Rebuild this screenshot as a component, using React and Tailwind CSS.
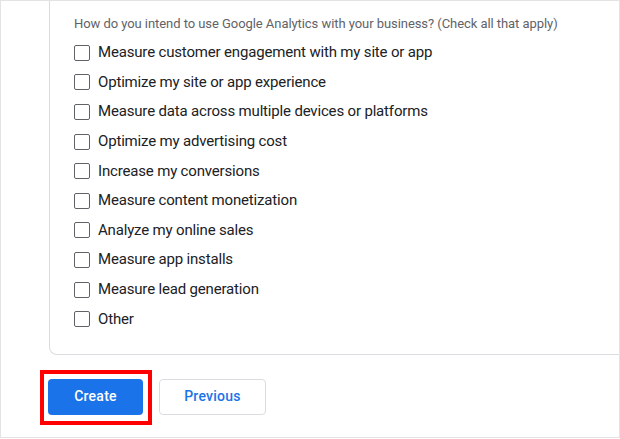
import React from "react";

const items = [
  "Measure customer engagement with my site or app",
  "Optimize my site or app experience",
  "Measure data across multiple devices or platforms",
  "Optimize my advertising cost",
  "Increase my conversions",
  "Measure content monetization",
  "Analyze my online sales",
  "Measure app installs",
  "Measure lead generation",
  "Other",
];

export default function App() {
  return (
    <div
      className="w-[620px] h-[438px] border border-[#e3e3e3] bg-white overflow-hidden"
      style={{ fontFamily: "Roboto, 'Noto Sans', Arial, sans-serif" }}
    >
      <div className="ml-[48px] border-l border-b border-[#dadce0] rounded-bl-[8px] pl-[24px] pt-[13px] pb-[20px]">
        <div className="text-[13px] leading-[20px] text-[#5f6368] tracking-[-0.06px] h-[24px]">
          How do you intend to use Google Analytics with your business? (Check all that apply)
        </div>
        <div className="flex flex-col">
          {items.map((t) => (
            <label key={t} className="flex items-center h-[29.6px]">
              <span className="w-[16px] h-[16px] border-[1.6px] border-[#5f6368] rounded-[2px] shrink-0"></span>
              <span className="ml-[8px] text-[15px] text-[#202124] tracking-[-0.17px] leading-none">{t}</span>
            </label>
          ))}
        </div>
      </div>
      <div className="flex items-center gap-[16px] mt-[24px] ml-[47px]">
        <div className="relative">
          <div className="absolute -left-[8px] -top-[9px] -right-[9px] -bottom-[10px] border-4 border-[#ff0000]"></div>
          <button className="relative w-[95px] h-[36px] rounded-[4px] bg-[#1a73e8] text-white text-[14px] font-medium tracking-[0.25px]">
            Create
          </button>
        </div>
        <button className="w-[107px] h-[36px] rounded-[4px] border border-[#dadce0] bg-white text-[#1a73e8] text-[14px] font-medium tracking-[0.25px]">
          Previous
        </button>
      </div>
    </div>
  );
}
